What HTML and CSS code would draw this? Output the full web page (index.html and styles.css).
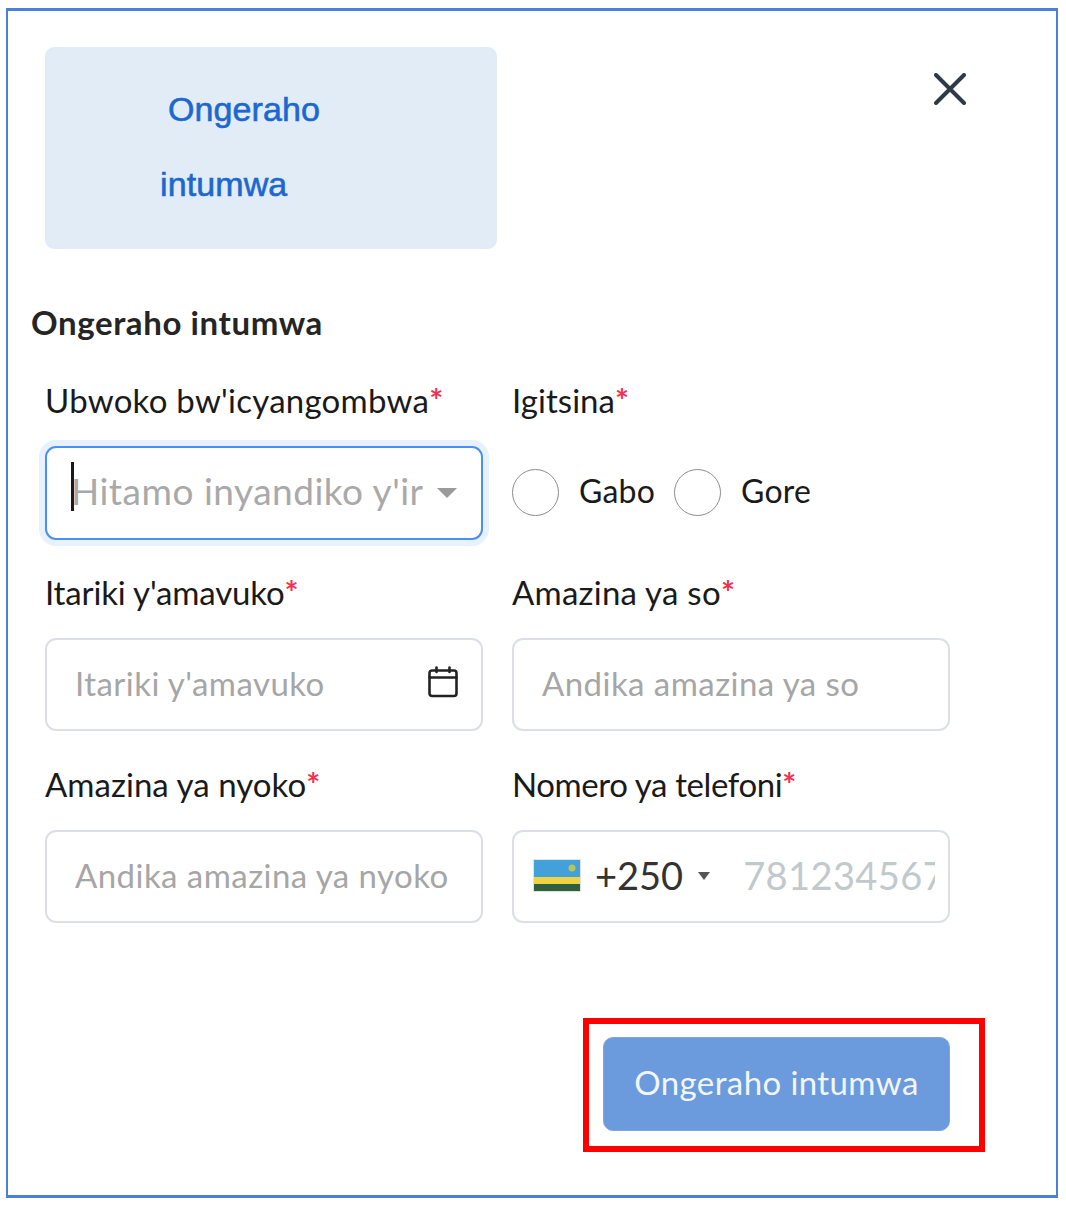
FILE: index.html
```html
<!DOCTYPE html>
<html lang="rw">
<head>
<meta charset="utf-8">
<title>Ongeraho intumwa</title>
<link rel="stylesheet" href="styles.css">
</head>
<body>
<main class="frame">
  <header class="top">
    <div class="tab"><span class="tab-a">Ongeraho</span><span class="tab-b">intumwa</span></div>
    <svg class="close" viewBox="0 0 32 32" width="32" height="32"><path d="M2 2L30 30M30 2L2 30" fill="none" stroke="#2d3a4a" stroke-width="4" stroke-linecap="round"/></svg>
  </header>
  <h2 class="title">Ongeraho intumwa</h2>
  <form class="grid">
    <div class="field">
      <label class="label">Ubwoko bw'icyangombwa<span class="req">*</span></label>
      <div class="box box-focus"><i class="cursor"></i><span class="select-text">Hitamo inyandiko y'ir</span><i class="caret"></i></div>
    </div>
    <div class="field">
      <label class="label label-snug">Igitsina<span class="req">*</span></label>
      <div class="radios">
        <i class="radio"></i><span class="radio-text">Gabo</span>
        <i class="radio"></i><span class="radio-text">Gore</span>
      </div>
    </div>
    <div class="field">
      <label class="label label-tight">Itariki y'amavuko<span class="req">*</span></label>
      <div class="box box-pad box-between"><span class="ph">Itariki y'amavuko</span>
        <svg class="cal" viewBox="0 0 30 32" width="30" height="32"><g fill="none" stroke="#222" stroke-width="2.6" stroke-linecap="round"><rect x="1.5" y="4.5" width="27" height="25.5" rx="2.5"/><path d="M1.5 11.5H28.5M8.5 1.5V6M21.5 1.5V6"/></g></svg>
      </div>
    </div>
    <div class="field">
      <label class="label">Amazina ya so<span class="req">*</span></label>
      <div class="box box-pad"><span class="ph">Andika amazina ya so</span></div>
    </div>
    <div class="field">
      <label class="label label-snug">Amazina ya nyoko<span class="req">*</span></label>
      <div class="box box-pad"><span class="ph">Andika amazina ya nyoko</span></div>
    </div>
    <div class="field">
      <label class="label label-tighter">Nomero ya telefoni<span class="req">*</span></label>
      <div class="box box-phone">
        <svg class="flag" viewBox="0 0 48 33" width="48" height="33"><rect width="48" height="33" fill="#dfe3e3"/><rect x="1" y="1" width="46" height="17" fill="#42a0db"/><rect x="1" y="18" width="46" height="7" fill="#f0d343"/><rect x="1" y="25" width="46" height="7" fill="#2f5f3e"/><circle cx="39" cy="9" r="3.5" fill="#b7c45a"/></svg>
        <span class="code">+250</span><i class="caret-small"></i>
        <span class="phone-ph">781234567</span>
      </div>
    </div>
  </form>
  <div class="actions">
    <div class="highlight"><button type="button" class="submit">Ongeraho intumwa</button></div>
  </div>
</main>
</body>
</html>
```
FILE: styles.css
```css
* { box-sizing: border-box; }
html, body { margin: 0; padding: 0; background: #fff; }
body { padding: 8px 0 0 6px; font-family: "Lato", "Noto Sans", sans-serif; color: #1c1c1c; }
.frame {
  width: 1052px; height: 1190px;
  border-style: solid; border-color: #4a80d9; border-width: 3px 2px;
  padding: 36px 0 0 37px;
}
.top { display: flex; justify-content: space-between; align-items: flex-start; width: 921px; }
.tab {
  width: 452px; height: 202px; background: #e2ecf7; border-radius: 9px;
  color: #1c68d0; font-family: "Liberation Sans", Arial, sans-serif; font-size: 34px; letter-spacing: .1px; -webkit-text-stroke: .6px #1c68d0;
  display: flex; flex-direction: column; line-height: 75px; padding-top: 25px;
}
.tab-a { padding-left: 123px; }
.tab-b { padding-left: 115px; }
.close { margin-top: 26px; }
.title { margin: 53px 0 0 -14px; font-size: 33px; line-height: 40px; font-weight: 700; color: #252525; letter-spacing: .6px; }
.grid { display: grid; grid-template-columns: 438px 438px; column-gap: 29px; row-gap: 0; margin-top: 39px; }
.field { height: 192px; display: flex; flex-direction: column; }
.label { display: block; height: 38px; font-size: 33px; line-height: 38px; letter-spacing: .25px; color: #1a1a1a; margin-bottom: 27px; white-space: nowrap; }
.label-snug { letter-spacing: .05px; }
.label-tight { letter-spacing: -.15px; }
.label-tighter { letter-spacing: -.4px; }
.req { color: #f5304f; font-weight: 700; }
.box {
  width: 438px; height: 93px; border: 2px solid #dcdfe6; border-radius: 11px;
  display: flex; align-items: center; background: #fff; overflow: hidden; flex: none;
}
.box-focus { border-color: #4a90f0; box-shadow: 0 0 0 6px #e8f1fe; overflow: visible; height: 94px; padding-left: 24px; }
.cursor { width: 3px; height: 49px; background: #1a1a1a; flex: none; margin-top: -13px; }
.select-text { font-size: 37px; letter-spacing: .5px; color: #a9a9a9; white-space: nowrap; width: 355px; overflow: hidden; margin: -6px 0 0 -3px; }
.caret { width: 0; height: 0; border-style: solid; border-width: 10px 10.5px 0; border-color: #9a9a9a transparent transparent; margin-left: 11px; }
.box-pad { padding: 0 23px 0 28px; }
.box-between { justify-content: space-between; }
.ph { font-size: 33px; letter-spacing: .45px; color: #a6a6a6; white-space: nowrap; margin-top: -4px; }
.cal { margin-top: -6px; }
.radios { display: flex; align-items: center; height: 94px; }
.radio { width: 47px; height: 47px; border: 1.5px solid #8c8c8c; border-radius: 50%; flex: none; margin-top: -1px; }
.radio-text { font-size: 32px; letter-spacing: .2px; width: 115px; padding-left: 20px; margin-top: -6px; color: #1a1a1a; }
.box-phone { padding: 0 13px 0 19px; }
.flag { flex: none; margin-top: -2px; }
.code { font-size: 38px; color: #333; margin: -4px 0 0 14px; }
.caret-small { width: 0; height: 0; border-style: solid; border-width: 8px 6px 0; border-color: #555 transparent transparent; margin: -2px 0 0 15px; flex: none; }
.phone-ph { font-size: 38px; color: #c2c9cc; margin: -4px 0 0 33px; overflow: hidden; white-space: nowrap; flex: 1; min-width: 0; letter-spacing: .4px; }
.actions { display: flex; padding-left: 538px; }
.highlight { width: 402px; height: 134px; border: 6px solid #f00; padding: 13px 0 0 14px; margin-top: 61px; }
.submit {
  width: 347px; height: 94px; border: 1px solid #7aa8e6; border-radius: 10px; background: #6b9bdd; color: #f2f6fc;
  font-family: inherit; font-size: 33px; letter-spacing: .4px; padding: 0 0 4px;
}
```
